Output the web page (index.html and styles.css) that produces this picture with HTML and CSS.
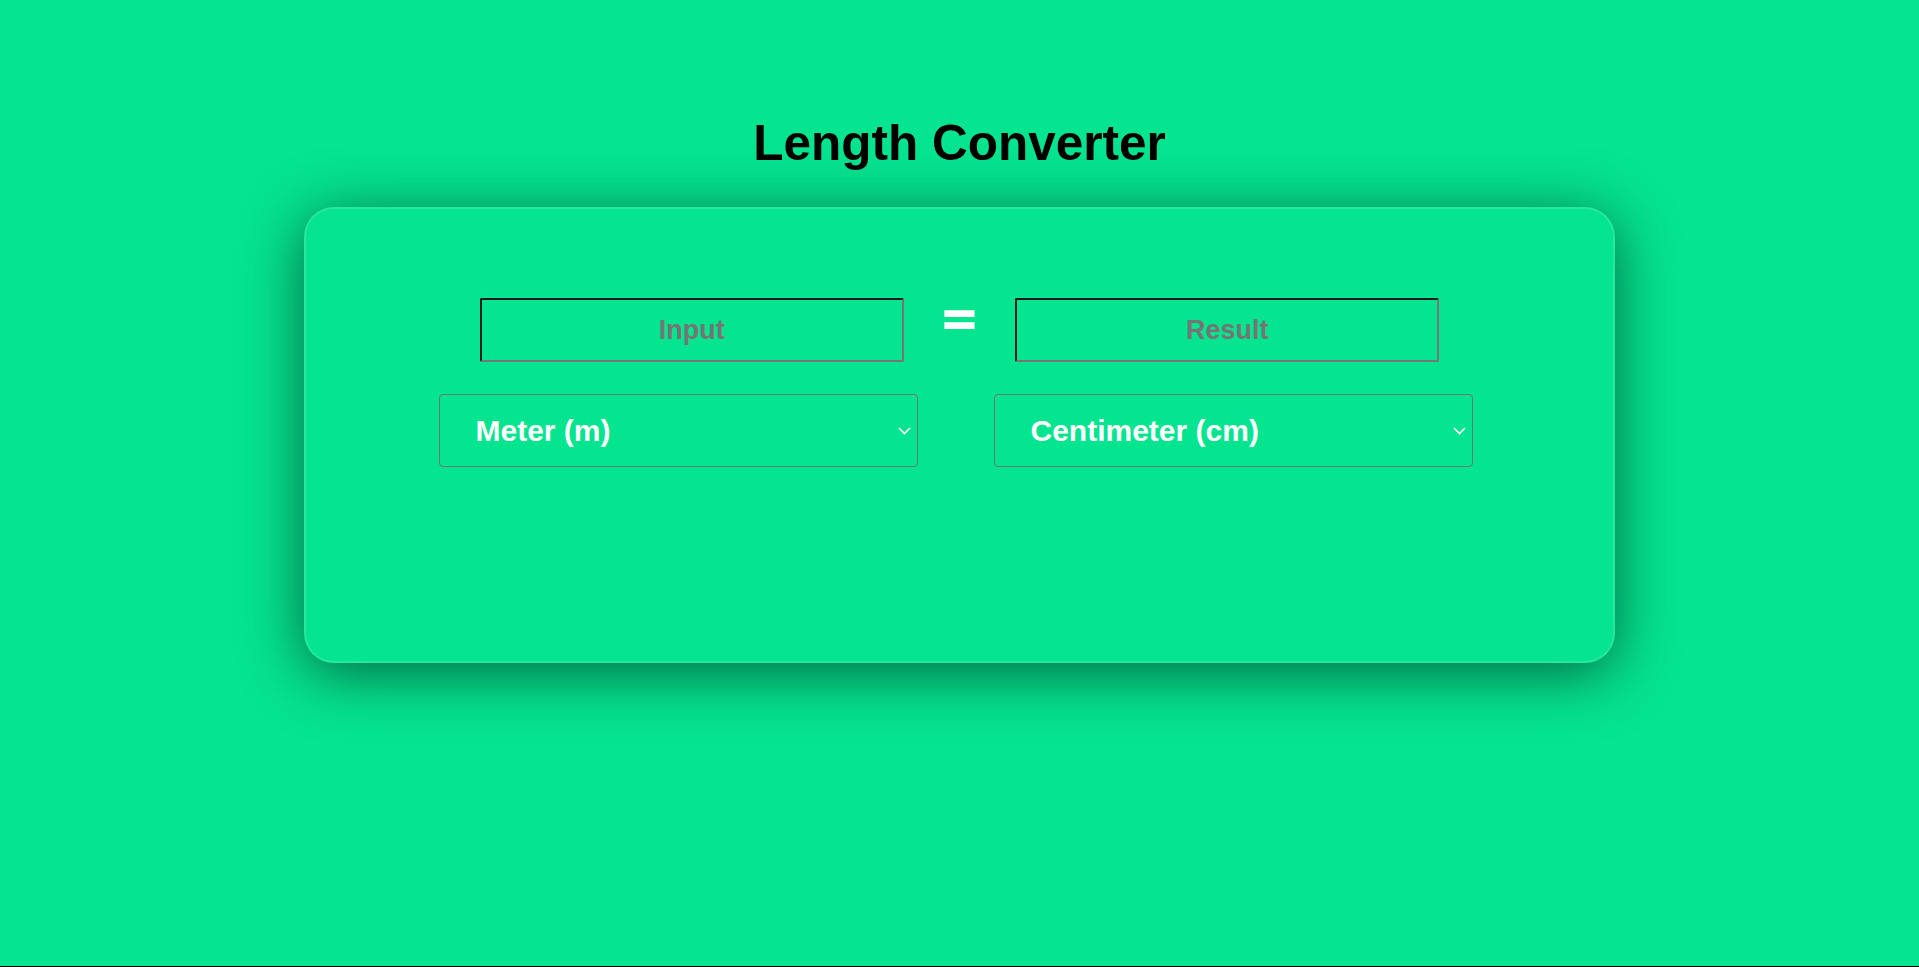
FILE: index.html
```html
<!DOCTYPE html>
<html lang="en">
<head>
<meta charset="utf-8">
<title>Length Converter</title>
<link rel="stylesheet" href="styles.css">
</head>
<body>
<div class="page">
  <h1 class="title">Length Converter</h1>
  <div class="card">
    <div class="value-row">
      <input class="field" type="text" placeholder="Input">
      <span class="equals">=</span>
      <input class="field" type="text" placeholder="Result" readonly>
    </div>
    <div class="unit-row">
      <div class="select-wrap">
        <select class="unit">
          <option>Meter (m)</option>
          <option>Centimeter (cm)</option>
          <option>Kilometer (km)</option>
        </select>
        <svg class="chevron" width="13" height="8" viewBox="0 0 13 8"><path d="M1 1 L6.5 6.5 L12 1" fill="none" stroke="#fff" stroke-width="1.6"/></svg>
      </div>
      <div class="select-wrap">
        <select class="unit">
          <option>Centimeter (cm)</option>
          <option>Meter (m)</option>
          <option>Kilometer (km)</option>
        </select>
        <svg class="chevron" width="13" height="8" viewBox="0 0 13 8"><path d="M1 1 L6.5 6.5 L12 1" fill="none" stroke="#fff" stroke-width="1.6"/></svg>
      </div>
    </div>
  </div>
</div>
</body>
</html>
```
FILE: styles.css
```css
html, body {
  margin: 0;
  padding: 0;
  background: #000;
}
body {
  font-family: "Liberation Sans", Arial, sans-serif;
}
.page {
  height: 966px;
  background: #05e48f;
  display: flex;
  flex-direction: column;
  align-items: center;
  overflow: hidden;
}
.title {
  margin: 114px 0 36px;
  font-size: 49.5px;
  font-weight: 700;
  line-height: 57px;
  color: #000;
}
.card {
  box-sizing: border-box;
  width: 1311px;
  height: 456px;
  border: 2px solid rgba(255, 255, 255, 0.13);
  border-radius: 30px;
  background: #05e48f;
  box-shadow: 0 10px 60px rgba(0, 0, 0, 0.55);
  display: flex;
  flex-direction: column;
  align-items: center;
  padding-top: 89px;
}
.value-row {
  display: flex;
  align-items: flex-start;
  gap: 38px;
}
.field {
  box-sizing: border-box;
  width: 424px;
  height: 64px;
  border: 2px solid;
  border-color: #1c1c1c #767676 #767676 #1c1c1c;
  border-radius: 2px;
  background: transparent;
  font-family: "Liberation Sans", Arial, sans-serif;
  font-size: 27px;
  font-weight: 700;
  text-align: center;
  color: #000;
  outline: none;
}
.field::placeholder {
  color: #757575;
}
.equals {
  font-family: "Noto Sans", "Liberation Sans", sans-serif;
  font-size: 62px;
  font-weight: 700;
  line-height: 64px;
  color: #fff;
  margin-top: -12px;
}
.unit-row {
  display: flex;
  gap: 76px;
  margin-top: 32px;
  padding-right: 8px;
}
.select-wrap {
  position: relative;
}
.unit {
  box-sizing: border-box;
  width: 479px;
  height: 73px;
  appearance: none;
  -webkit-appearance: none;
  border: 1px solid #667a70;
  border-radius: 4px;
  background: transparent;
  padding: 0 40px 0 36px;
  font-family: "Liberation Sans", Arial, sans-serif;
  font-size: 30px;
  font-weight: 700;
  color: #fff;
  outline: none;
}
.chevron {
  position: absolute;
  right: 7px;
  top: 33px;
  pointer-events: none;
}
```
